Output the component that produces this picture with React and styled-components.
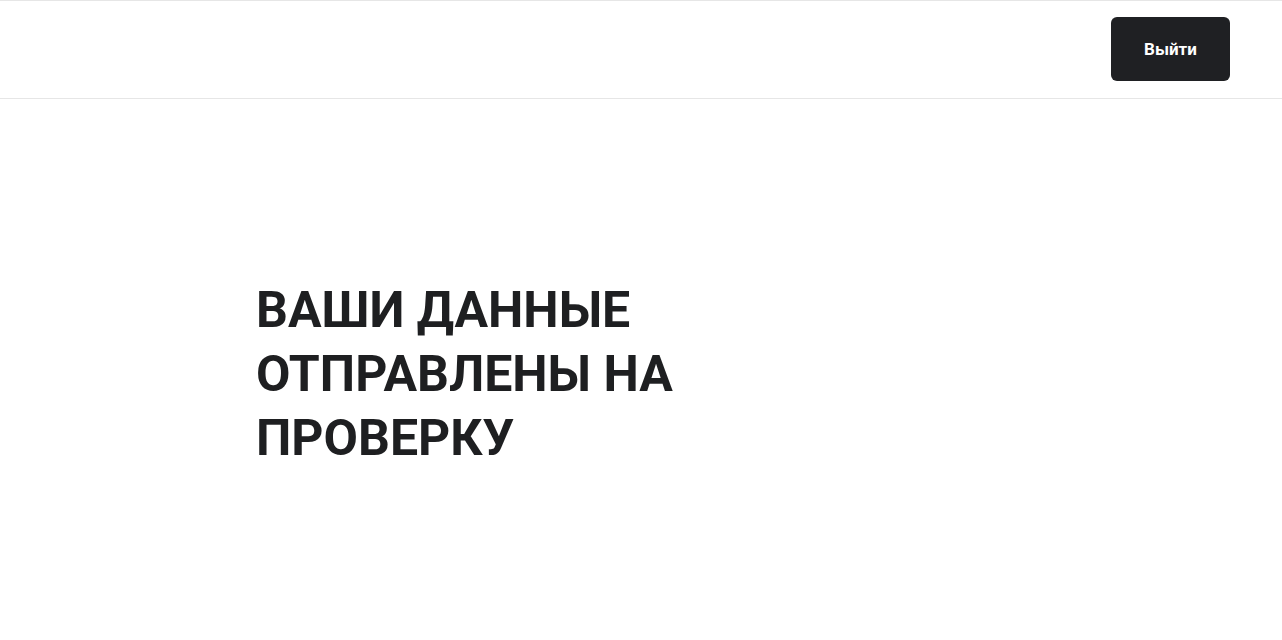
import styled, { createGlobalStyle } from "styled-components";

const GlobalStyle = createGlobalStyle`
  html, body {
    margin: 0;
    padding: 0;
    background: #fff;
    font-family: Roboto, "Liberation Sans", sans-serif;
  }
`;

const Header = styled.header`
  display: flex;
  justify-content: flex-end;
  align-items: center;
  box-sizing: border-box;
  height: 99px;
  padding: 0 52px 1px 0;
  border-top: 1px solid #e6e6e6;
  border-bottom: 1px solid #e6e6e6;
`;

const LogoutButton = styled.button`
  width: 119px;
  height: 64px;
  border: none;
  border-radius: 6px;
  background: #1f2023;
  color: #fff;
  font-family: Roboto, "Liberation Sans", sans-serif;
  font-size: 17px;
  font-weight: 700;
  cursor: pointer;
`;

const Main = styled.main`
  padding: 179px 0 0 256px;
`;

const Title = styled.h1`
  margin: 0;
  max-width: 460px;
  color: #1e1f21;
  font-size: 50px;
  line-height: 64px;
  font-weight: 700;
  text-transform: uppercase;
`;

export default function App() {
  return (
    <>
      <GlobalStyle />
      <Header>
        <LogoutButton>Выйти</LogoutButton>
      </Header>
      <Main>
        <Title>Ваши данные отправлены на проверку</Title>
      </Main>
    </>
  );
}
